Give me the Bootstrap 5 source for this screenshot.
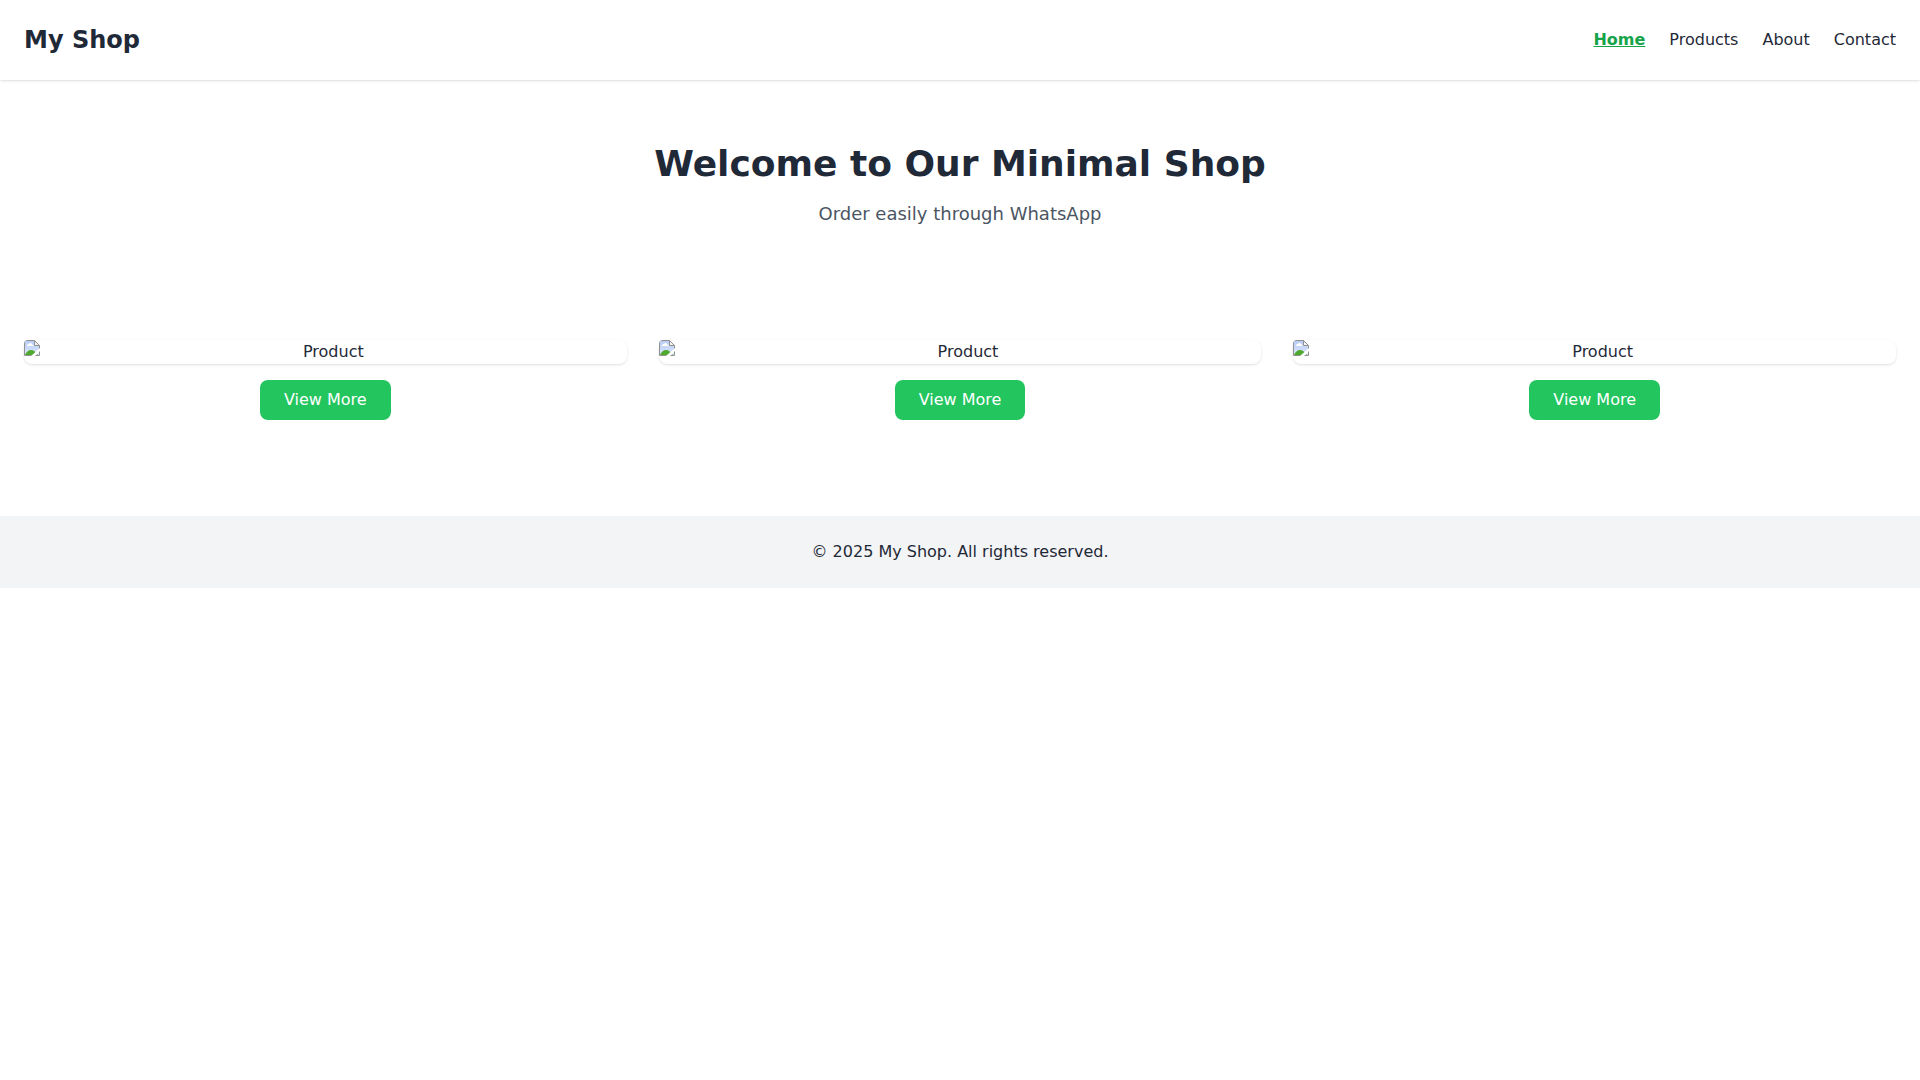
<!DOCTYPE html>
<html lang="en">
<head>
<meta charset="utf-8">
<meta name="viewport" content="width=device-width, initial-scale=1">
<title>My Shop</title>
<link href="https://cdn.jsdelivr.net/npm/bootstrap@5.3.0/dist/css/bootstrap.min.css" rel="stylesheet">
<style>
  body { font-family: "DejaVu Sans", sans-serif; font-size: 16px; line-height: 24px; color: #1f2937; background: #fff; }
  .site-header, .photo-frame { box-shadow: 0 1px 3px rgba(0,0,0,.1), 0 1px 2px -1px rgba(0,0,0,.1); }
  .site-title { font-size: 24px; line-height: 32px; }
  .site-nav { gap: 24px; }
  .site-nav .nav-link { padding: 0; color: #1f2937; }
  .site-nav .nav-link.active { color: #16a34a; font-weight: 700; text-decoration: underline; }
  .hero { padding: 64px 24px; }
  .hero h1 { font-size: 36px; line-height: 40px; }
  .hero p { font-size: 18px; line-height: 28px; color: #4b5563; }
  .products { padding: 48px 24px; margin-bottom: 48px; }
  .products .row { --bs-gutter-x: 32px; --bs-gutter-y: 32px; }
  .photo-frame { border-radius: 8px; }
  .photo-frame svg { width: 16px; height: 16px; border-top-left-radius: 4px; }
  .btn-view { --bs-btn-color: #fff; --bs-btn-bg: #22c55e; --bs-btn-hover-color: #fff; --bs-btn-hover-bg: #16a34a; --bs-btn-active-bg: #16a34a; --bs-btn-active-color: #fff;
    --bs-btn-padding-x: 24px; --bs-btn-padding-y: 8px; --bs-btn-line-height: 24px; --bs-btn-border-width: 0; --bs-btn-border-radius: 8px; }
  .site-footer { background: #f3f4f6; }
</style>
<script src="https://cdn.jsdelivr.net/npm/bootstrap@5.3.0/dist/js/bootstrap.bundle.min.js" defer></script>
</head>
<body>
<svg width="0" height="0" class="position-absolute" aria-hidden="true">
  <linearGradient id="sky" x1="0" y1="0" x2="0" y2="1">
    <stop offset="0" stop-color="#b9cdf5"/>
    <stop offset="1" stop-color="#dbe5fb"/>
  </linearGradient>
  <symbol id="photo" viewBox="0 0 16 16">
    <path d="M1 1h9.500v5H15v9H1z" fill="url(#sky)"/>
    <path d="M11 1v4h4z" fill="#f2f2f2"/>
    <path d="M3 6c0-1.500 1-2 2-2 .5-1.500 3-1 3 .5 1 0 1.500.5 1.500 1.500z" fill="#fff"/>
    <path d="M1 15c1-3 3.500-5 6-5 2.500 0 5 2 7 5z" fill="#4fa92f"/>
    <path d="M16 8v3.500L11.500 16H7z" fill="#fff"/>
    <path d="M7.500 15.500H.5V.5h10l5 5V8.500M15.500 11.500v4H11.500M10.500.5v5h5" fill="none" stroke="#919191"/>
  </symbol>
</svg>

<header class="site-header d-flex justify-content-between align-items-center p-4">
  <h1 class="site-title fw-bold mb-0">My Shop</h1>
  <nav class="site-nav nav">
    <a class="nav-link active" href="#" aria-current="page">Home</a>
    <a class="nav-link" href="#">Products</a>
    <a class="nav-link" href="#">About</a>
    <a class="nav-link" href="#">Contact</a>
  </nav>
</header>

<main>
  <section class="hero text-center">
    <h1 class="fw-bold mb-3">Welcome to Our Minimal Shop</h1>
    <p class="mb-0">Order easily through WhatsApp</p>
  </section>

  <section class="products">
    <div class="row row-cols-1 row-cols-md-3 text-center">
      <div class="col">
        <div class="photo-frame d-flex mb-3"><svg class="flex-shrink-0" aria-hidden="true"><use href="#photo"/></svg><span class="flex-grow-1">Product</span></div>
        <button type="button" class="btn btn-view">View More</button>
      </div>
      <div class="col">
        <div class="photo-frame d-flex mb-3"><svg class="flex-shrink-0" aria-hidden="true"><use href="#photo"/></svg><span class="flex-grow-1">Product</span></div>
        <button type="button" class="btn btn-view">View More</button>
      </div>
      <div class="col">
        <div class="photo-frame d-flex mb-3"><svg class="flex-shrink-0" aria-hidden="true"><use href="#photo"/></svg><span class="flex-grow-1">Product</span></div>
        <button type="button" class="btn btn-view">View More</button>
      </div>
    </div>
  </section>
</main>

<footer class="site-footer text-center p-4">
  <p class="mb-0">© 2025 My Shop. All rights reserved.</p>
</footer>
</body>
</html>
